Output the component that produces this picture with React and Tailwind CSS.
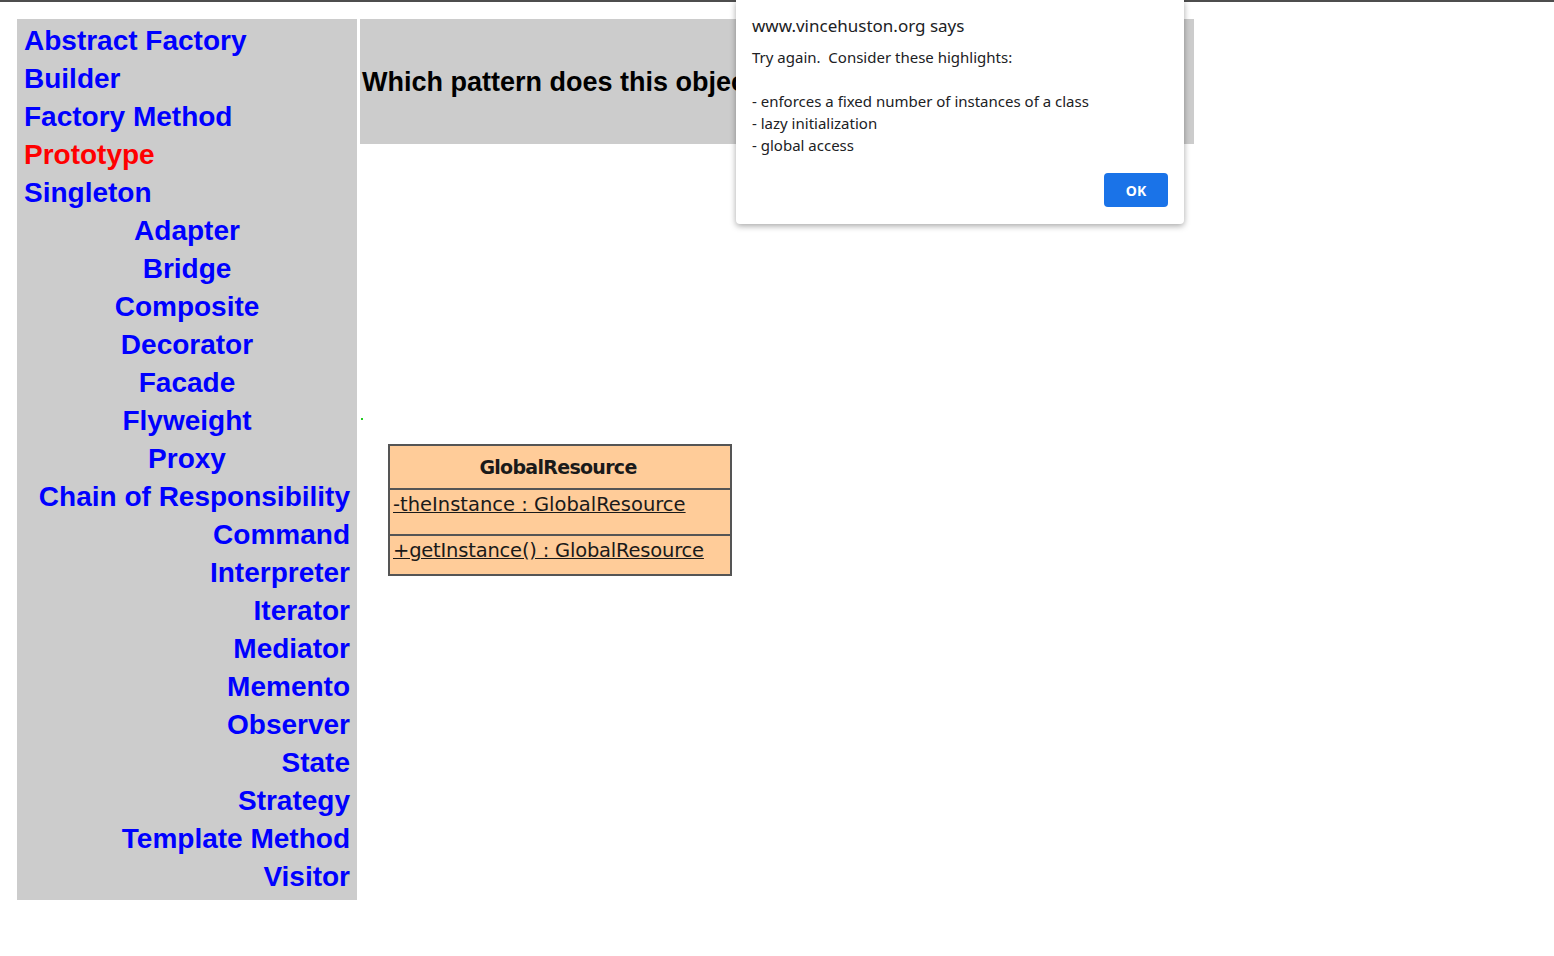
import React from 'react';

const creational = ['Abstract Factory', 'Builder', 'Factory Method', 'Prototype', 'Singleton'];
const structural = ['Adapter', 'Bridge', 'Composite', 'Decorator', 'Facade', 'Flyweight', 'Proxy'];
const behavioral = [
  'Chain of Responsibility',
  'Command',
  'Interpreter',
  'Iterator',
  'Mediator',
  'Memento',
  'Observer',
  'State',
  'Strategy',
  'Template Method',
  'Visitor',
];

const NavLink = ({ label, align }) => (
  <a
    href="#"
    className={`block leading-[38px] text-[28px] font-bold ${align} ${label === 'Prototype' ? 'text-[#ff0000]' : 'text-[#0000ff]'}`}
  >
    {label}
  </a>
);

const App = () => {
  return (
    <div className="relative min-h-screen bg-white font-['Liberation_Sans',Arial,sans-serif]">
      {/* browser chrome edge */}
      <div className="h-[2px] bg-[#4d4d4d]" />

      <div className="flex items-start gap-[3px] pl-[17px] pt-[17px]">
        {/* Pattern list */}
        <nav className="w-[340px] bg-[#cccccc] px-[7px] pt-[3px] pb-[4px]">
          {creational.map((p) => (
            <NavLink key={p} label={p} align="text-left" />
          ))}
          {structural.map((p) => (
            <NavLink key={p} label={p} align="text-center" />
          ))}
          {behavioral.map((p) => (
            <NavLink key={p} label={p} align="text-right" />
          ))}
        </nav>

        {/* Question + diagram */}
        <div className="flex w-[834px] flex-col">
          <div className="flex h-[125px] items-center bg-[#cccccc] px-[2px] pt-[2px]">
            <h2 className="text-[27px] font-bold text-black">
              Which pattern does this object model represent?
            </h2>
          </div>

          <div className="mt-[274px] flex flex-col">
            <div className="ml-[1px] h-[2px] w-[2px] bg-[#22cc22]" />
            <div className="ml-[28px] mt-[24px] w-[344px] border-2 border-[#555555] bg-[#ffcc99] font-['DejaVu_Sans',sans-serif] text-[#1a1a1a]">
              <div className="flex h-[44px] items-center justify-center border-b-2 border-[#555555] pr-[4px] text-[19px] font-bold tracking-[-0.7px]">
                GlobalResource
              </div>
              <div className="h-[46px] border-b-2 border-[#555555] px-[3px] pt-[2px] text-[19.5px] leading-[26px] underline">
                -theInstance : GlobalResource
              </div>
              <div className="h-[38px] px-[3px] pt-[2px] text-[19.5px] leading-[26px] tracking-[-0.2px] underline">
                +getInstance() : GlobalResource
              </div>
            </div>
          </div>
        </div>
      </div>

      {/* alert dialog */}
      <div className="absolute left-[736px] top-0 flex h-[224px] w-[448px] flex-col rounded-b-[4px] bg-white px-[16px] pt-[13px] font-['Noto_Sans',sans-serif] text-[#202124] shadow-[0_2px_6px_rgba(0,0,0,0.35)]">
        <div className="text-[17px] leading-[26px]">www.vincehuston.org says</div>
        <div className="mt-[7px] text-[15px] leading-[22px]">
          <div>Try again.&nbsp; Consider these highlights:</div>
          <div className="h-[22px]" />
          <div>- enforces a fixed number of instances of a class</div>
          <div>- lazy initialization</div>
          <div>- global access</div>
        </div>
        <div className="mt-[17px] flex justify-end">
          <button className="h-[34px] w-[64px] rounded-[4px] bg-[#1a73e8] text-[14px] font-bold text-white">
            OK
          </button>
        </div>
      </div>
    </div>
  );
};

export default App;
